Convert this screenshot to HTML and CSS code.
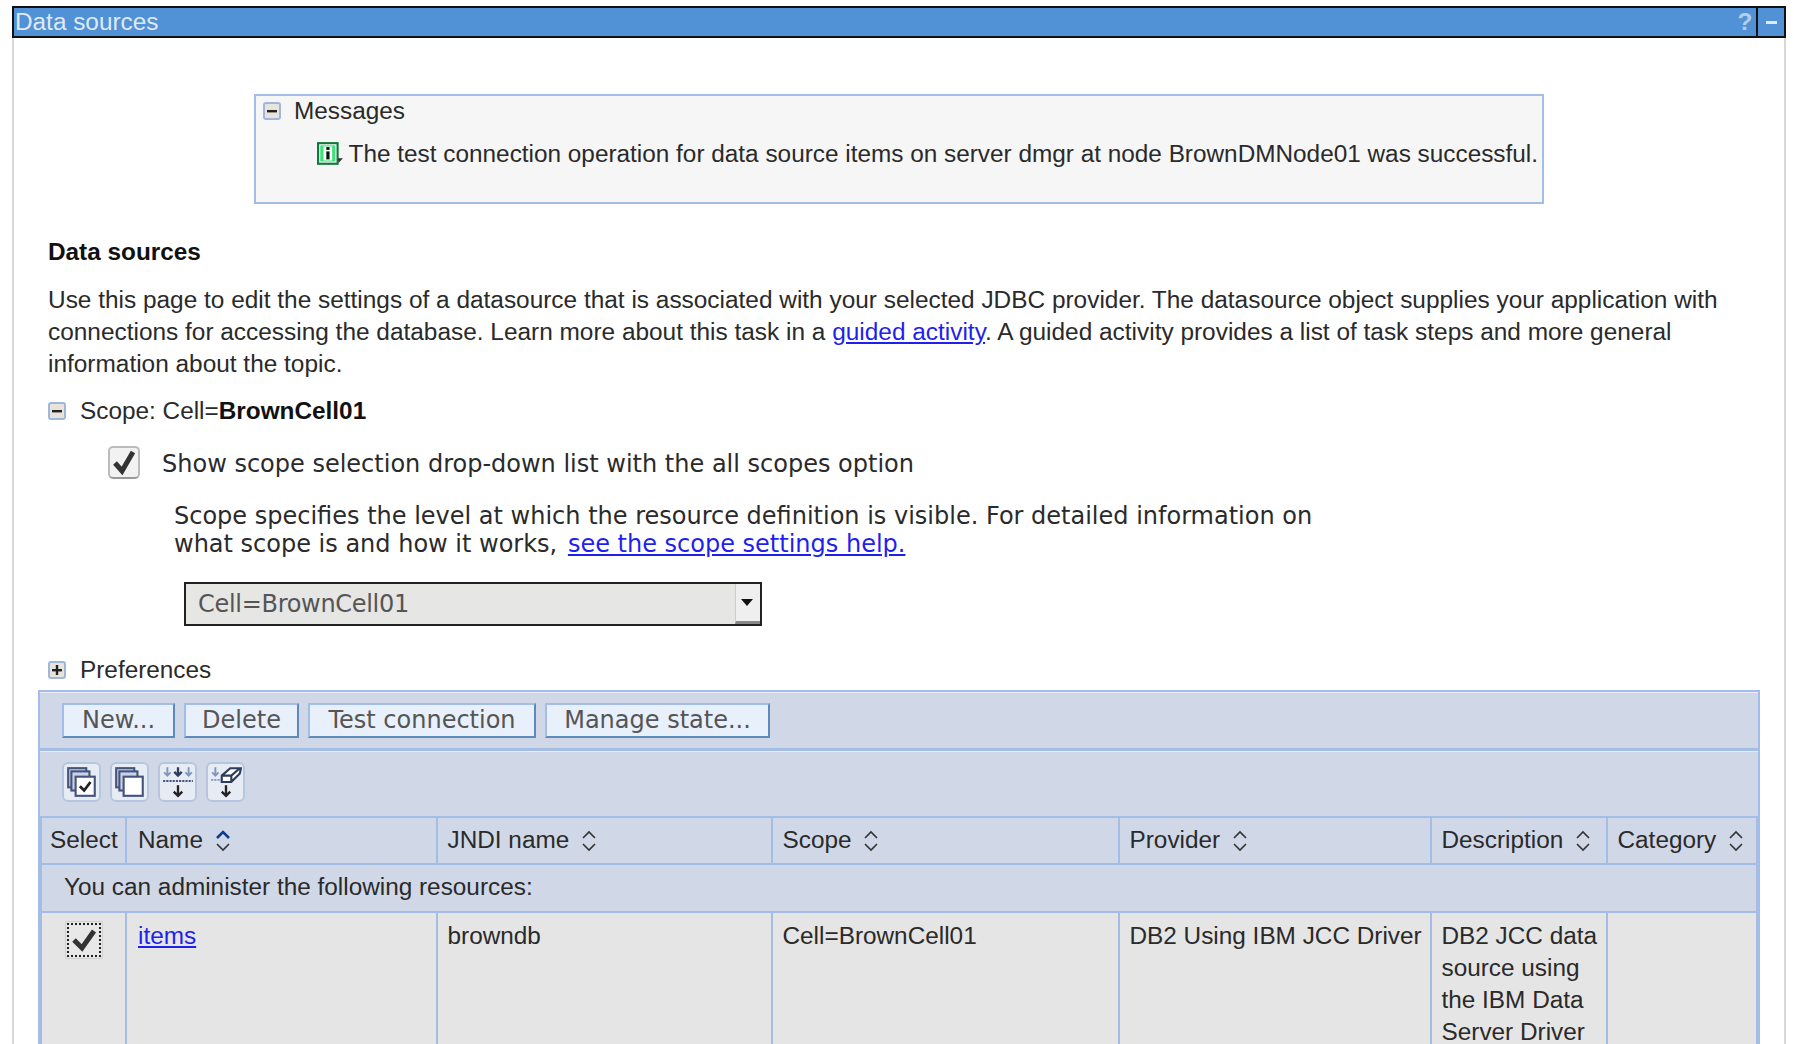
FILE: index.html
```html
<!DOCTYPE html>
<html>
<head>
    <title>Data sources</title>
    <link rel="stylesheet" href="styles.css">
</head>
<body>
    <svg class="defs" width="0" height="0">
        <symbol id="minus" viewBox="0 0 18 18">
            <rect x="1" y="1" width="16" height="16" rx="2" fill="#e8e4dc" stroke="#9db8dc" stroke-width="2"/>
            <rect x="4" y="8" width="10" height="2.4" fill="#222"/>
        </symbol>
        <symbol id="plus" viewBox="0 0 18 18">
            <rect x="1" y="1" width="16" height="16" rx="2" fill="#e8e4dc" stroke="#9db8dc" stroke-width="2"/>
            <rect x="4" y="8" width="10" height="2.4" fill="#222"/>
            <rect x="7.8" y="4" width="2.4" height="10" fill="#222"/>
        </symbol>
        <symbol id="sort" viewBox="0 0 16 24">
            <path d="M2 9 L8 3 L14 9" fill="none" stroke="#333" stroke-width="1.6"/>
            <path d="M2 15 L8 21 L14 15" fill="none" stroke="#333" stroke-width="1.6"/>
        </symbol>
        <symbol id="sort-up" viewBox="0 0 16 24">
            <path d="M2 9 L8 3 L14 9" fill="none" stroke="#0b3f8a" stroke-width="2.6"/>
            <path d="M2 15 L8 21 L14 15" fill="none" stroke="#333" stroke-width="1.6"/>
        </symbol>
    </svg>

    <div class="panel">
        <div class="titlebar">
            <span class="title">Data sources</span>
            <span class="help">?</span>
            <span class="minimize"><i></i></span>
        </div>

        <div class="content">
            <div class="messages">
                <div class="toggle-row msg-head">
                    <svg class="toggle"><use href="#minus"/></svg>
                    <span>Messages</span>
                </div>
                <div class="msg-line">
                    <svg class="info" width="26" height="24" viewBox="0 0 24 22">
                        <rect x="1" y="1" width="18" height="19" fill="#fff" stroke="#0f7a3a" stroke-width="2"/>
                        <rect x="3" y="3" width="14" height="15" fill="#3fe07a"/>
                        <rect x="6" y="4" width="8" height="13" fill="#f4fff6"/>
                        <rect x="8.6" y="4.6" width="3" height="2.6" fill="#111"/>
                        <rect x="8.6" y="8.6" width="3" height="7.4" fill="#111"/>
                        <path d="M19 15 H24 L20 19 Z" fill="#333"/>
                    </svg>
                    <span>The test connection operation for data source items on server dmgr at node BrownDMNode01 was successful.</span>
                </div>
            </div>

            <h2 class="heading">Data sources</h2>
            <p class="intro">Use this page to edit the settings of a datasource that is associated with your selected JDBC provider. The datasource object supplies your application with connections for accessing the database. Learn more about this task in a <a href="#">guided activity</a>. A guided activity provides a list of task steps and more general information about the topic.</p>

            <div class="toggle-row scope-row">
                <svg class="toggle"><use href="#minus"/></svg>
                <span class="scope-label">Scope: Cell=<b>BrownCell01</b></span>
            </div>

            <div class="check-row">
                <span class="check">
                    <svg width="26" height="28" viewBox="0 0 26 28"><path d="M4 14 L11 22 L22 3" fill="none" stroke="#333" stroke-width="5"/></svg>
                </span>
                <span class="check-text">Show scope selection drop-down list with the all scopes option</span>
            </div>

            <p class="scope-help">Scope specifies the level at which the resource definition is visible. For detailed information on<br>what scope is and how it works, <a href="#">see the scope settings help.</a></p>

            <div class="select">
                <span class="select-value">Cell=BrownCell01</span>
                <span class="select-arrow"><i></i></span>
            </div>

            <div class="toggle-row pref-row">
                <svg class="toggle"><use href="#plus"/></svg>
                <span>Preferences</span>
            </div>

            <div class="collection">
                <div class="button-bar">
                    <button class="btn btn-new">New...</button>
                    <button class="btn btn-delete">Delete</button>
                    <button class="btn btn-test">Test connection</button>
                    <button class="btn btn-manage">Manage state...</button>
                </div>
                <div class="icon-bar">
                    <span class="tool">
                        <svg width="34" height="34" viewBox="0 0 32 32">
                            <rect x="3" y="3" width="17" height="18" fill="#c9d3e6" stroke="#44557c" stroke-width="2"/>
                            <rect x="6" y="6" width="17" height="18" fill="#c9d3e6" stroke="#44557c" stroke-width="2"/>
                            <rect x="10" y="11" width="18" height="18" fill="#fff" stroke="#44557c" stroke-width="2"/>
                            <path d="M14 20 L18 24 L24 16" fill="none" stroke="#222" stroke-width="2.6"/>
                        </svg>
                    </span>
                    <span class="tool">
                        <svg width="34" height="34" viewBox="0 0 32 32">
                            <rect x="3" y="3" width="17" height="18" fill="#c9d3e6" stroke="#44557c" stroke-width="2"/>
                            <rect x="6" y="6" width="17" height="18" fill="#c9d3e6" stroke="#44557c" stroke-width="2"/>
                            <rect x="10" y="11" width="18" height="18" fill="#fff" stroke="#44557c" stroke-width="2"/>
                        </svg>
                    </span>
                    <span class="tool">
                        <svg width="34" height="34" viewBox="0 0 32 32">
                            <path d="M6 2 V10 M3 7 L6 10 L9 7 M26 2 V10 M23 7 L26 10 L29 7" fill="none" stroke="#7f97bd" stroke-width="1.8"/>
                            <path d="M16 2 V10 M12.5 6.5 L16 10 L19.5 6.5" fill="none" stroke="#2d3c5c" stroke-width="2.2"/>
                            <path d="M2 15 H30" stroke="#44557c" stroke-width="1.8" stroke-dasharray="2 1"/>
                            <path d="M16 19 V29 M12 25 L16 29 L20 25" fill="none" stroke="#222" stroke-width="2.2"/>
                        </svg>
                    </span>
                    <span class="tool">
                        <svg width="34" height="34" viewBox="0 0 32 32">
                            <path d="M6 2 V10 M3 7 L6 10 L9 7" fill="none" stroke="#7f97bd" stroke-width="1.8"/>
                            <path d="M2 14 H12" stroke="#7f97bd" stroke-width="1.8" stroke-dasharray="2 1"/>
                            <path d="M12 10 L20 3 H30 L29 8 L21 16 H12 Z M12 10 H21 V16 M21 10 L29 3" fill="#fff" stroke="#2d3c5c" stroke-width="2"/>
                            <path d="M16 19 V29 M12 25 L16 29 L20 25" fill="none" stroke="#222" stroke-width="2.2"/>
                        </svg>
                    </span>
                </div>
                <table class="grid">
                    <colgroup>
                        <col class="c-select"><col class="c-name"><col class="c-jndi"><col class="c-scope"><col class="c-provider"><col class="c-desc"><col class="c-cat">
                    </colgroup>
                    <tr class="head">
                        <th class="sel-head">Select</th>
                        <th class="name-cell">Name <svg class="sort"><use href="#sort-up"/></svg></th>
                        <th>JNDI name <svg class="sort"><use href="#sort"/></svg></th>
                        <th>Scope <svg class="sort"><use href="#sort"/></svg></th>
                        <th>Provider <svg class="sort"><use href="#sort"/></svg></th>
                        <th>Description <svg class="sort"><use href="#sort"/></svg></th>
                        <th>Category <svg class="sort"><use href="#sort"/></svg></th>
                    </tr>
                    <tr class="note">
                        <td colspan="7">You can administer the following resources:</td>
                    </tr>
                    <tr class="data">
                        <td class="sel-cell">
                            <span class="row-check">
                                <svg width="28" height="28" viewBox="0 0 28 28"><path d="M4 14 L12 22 L24 5" fill="none" stroke="#333" stroke-width="5"/></svg>
                            </span>
                        </td>
                        <td class="name-cell"><a href="#">items</a></td>
                        <td>browndb</td>
                        <td>Cell=BrownCell01</td>
                        <td>DB2 Using IBM JCC Driver</td>
                        <td>DB2 JCC data source using the IBM Data Server Driver</td>
                        <td></td>
                    </tr>
                </table>
            </div>
        </div>
    </div>
</body>
</html>
```

FILE: styles.css
```css
html, body {
    margin: 0;
    height: 100%;
    overflow: hidden;
    background-color: #fff;
}

body {
    font-family: "Liberation Sans", Arial, sans-serif;
    font-size: 24.35px;
    line-height: 32px;
    color: #2a2a2a;
}

a {
    color: #1f1fee;
}

.defs {
    display: block;
    height: 0;
}

.panel {
    margin: 6px 8px 0 12px;
    border-left: 2px solid #d8d8d8;
    border-right: 2px solid #d8d8d8;
}

/* barra de titulo */
.titlebar {
    display: flex;
    align-items: center;
    height: 28px;
    margin: 0 -2px;
    background-color: #5191d5;
    border: 2px solid #111;
    color: #dfeaf6;
}

.title {
    flex: 1;
    padding-left: 1px;
}

.help {
    width: 22px;
    color: #b4cde8;
    font-weight: bold;
    text-align: center;
}

.minimize {
    display: flex;
    align-items: center;
    justify-content: center;
    width: 26px;
    height: 28px;
    border-left: 2px solid #111;
}

.minimize i {
    width: 11px;
    height: 3px;
    background-color: #dfeaf6;
}

.content {
    padding: 56px 22px 0 34px;
}

.toggle {
    width: 18px;
    height: 18px;
    flex: none;
}

.toggle-row {
    display: flex;
    align-items: center;
    gap: 14px;
}

.messages {
    box-sizing: border-box;
    width: 1290px;
    height: 110px;
    margin-left: 206px;
    padding: 0 4px 0 7px;
    background-color: #f6f6f6;
    border: 2px solid #a4bde6;
}

.msg-head {
    height: 30px;
    gap: 13px;
}

.msg-line {
    display: flex;
    align-items: center;
    justify-content: flex-end;
    gap: 6px;
    margin-top: 12px;
    white-space: nowrap;
}

.heading {
    margin: 32px 0 0;
    font-size: 24.35px;
    line-height: 32px;
    color: #111;
}

.intro {
    margin: 16px 0 0;
    font-size: 24.42px;
}

.scope-row {
    margin-top: 15px;
}

.scope-label b {
    color: #111;
}

.check-row {
    display: flex;
    align-items: flex-start;
    gap: 22px;
    margin: 19px 0 0 60px;
    font-family: "DejaVu Sans", sans-serif;
    font-size: 24px;
}

.check-text {
    padding-top: 2px;
}

.check {
    box-sizing: border-box;
    display: flex;
    align-items: center;
    justify-content: center;
    width: 32px;
    height: 33px;
    background-color: #f2f2f2;
    border: 2px solid #bbb;
    border-bottom-color: #999;
    border-radius: 5px;
}

.scope-help {
    margin: 22px 0 0 126px;
    font-family: "DejaVu Sans", sans-serif;
    font-size: 24px;
    line-height: 28px;
}

.scope-help a {
    margin-left: 3px;
}

.select {
    box-sizing: border-box;
    display: flex;
    justify-content: space-between;
    width: 578px;
    height: 44px;
    margin: 24px 0 0 136px;
    background-color: #e6e6e4;
    border: 2px solid #222;
    font-family: "DejaVu Sans", sans-serif;
    font-size: 24px;
    line-height: 40px;
    color: #555;
}

.select-value {
    padding-left: 12px;
    letter-spacing: -0.3px;
}

.select-arrow {
    box-sizing: border-box;
    display: flex;
    align-items: center;
    justify-content: center;
    width: 25px;
    padding-right: 2px;
    background-color: #efefef;
    border-left: 1px solid #ccc;
    border-bottom: 3px solid #888;
}

.select-arrow i {
    border-left: 6px solid transparent;
    border-right: 6px solid transparent;
    border-top: 7px solid #111;
}

.pref-row {
    margin-top: 28px;
}

/* tabla de recursos */
.collection {
    width: 1718px;
    margin: 4px 0 0 -10px;
    border: 2px solid #a4bde6;
    border-bottom: none;
    background-color: #a4bde6;
}

.button-bar {
    display: flex;
    gap: 9px;
    height: 56px;
    padding: 10px 0 0 22px;
    box-sizing: border-box;
    background-color: #d0d8e8;
    border-top: 1px solid #e8edf5;
}

.btn {
    box-sizing: border-box;
    height: 35px;
    padding: 0 0 2px;
    background-color: #e8f0fc;
    border: 2px solid;
    border-color: #a4bde6 #5d8ab8 #5d8ab8 #a4bde6;
    font-family: "DejaVu Sans", sans-serif;
    font-size: 24px;
    color: #555;
}

.btn-new { width: 113px; }
.btn-delete { width: 115px; }
.btn-test { width: 228px; }
.btn-manage { width: 225px; }

.icon-bar {
    display: flex;
    gap: 9px;
    box-sizing: border-box;
    height: 65px;
    margin-top: 3px;
    padding: 10px 0 0 22px;
    background-color: #d0d8e8;
    border-top: 1px solid #e8edf5;
}

.tool {
    box-sizing: border-box;
    display: flex;
    align-items: center;
    justify-content: center;
    width: 39px;
    height: 40px;
    background-color: #e6ebf4;
    border: 2px solid #b4c6e0;
    border-radius: 6px;
}

.grid {
    width: 100%;
    margin-top: 2px;
    table-layout: fixed;
    border-collapse: collapse;
}

.c-select { width: 85px; }
.c-name { width: 311px; }
.c-jndi { width: 335px; }
.c-scope { width: 347px; }
.c-provider { width: 312px; }
.c-desc { width: 176px; }

.grid th, .grid td {
    padding: 0 4px 0 9.5px;
    border: 2px solid #a4bde6;
    vertical-align: top;
    text-align: left;
    font-weight: normal;
}

.grid tr:first-child th {
    border-top: none;
}

.head th {
    height: 46px;
    padding-bottom: 2px;
    box-sizing: border-box;
    background-color: #d0d8e8;
    vertical-align: middle;
    white-space: nowrap;
}

.grid .sel-head {
    padding: 0 0 2px 8px;
}

.grid .name-cell {
    padding-left: 11px;
}

.sort {
    width: 16px;
    height: 24px;
    margin-left: 5px;
    vertical-align: -5px;
}

.note td {
    height: 48px;
    box-sizing: border-box;
    padding: 6px 22px 0;
    background-color: #d0d8e8;
}

.data td {
    padding-top: 7px;
    padding-bottom: 40px;
    background-color: #e5e5e5;
}

.grid .sel-cell {
    padding-left: 0;
    padding-right: 0;
    text-align: center;
}

.row-check {
    box-sizing: border-box;
    display: inline-flex;
    align-items: center;
    justify-content: center;
    width: 34px;
    height: 34px;
    background-color: #e8e8e8;
    border: 2px dotted #222;
    outline: 1px solid #d0d0d0;
    outline-offset: 1px;
    margin-top: 3px;
}
```
